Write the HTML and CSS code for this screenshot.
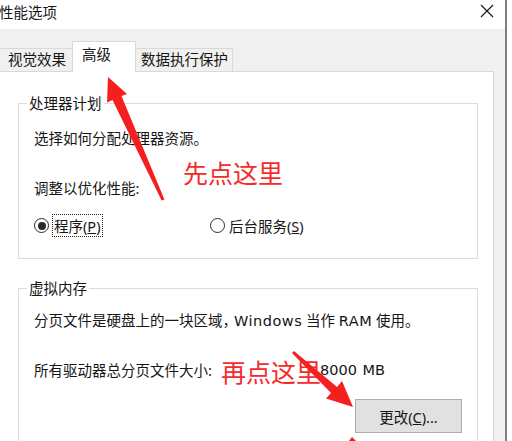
FILE: index.html
```html
<!DOCTYPE html>
<html lang="zh-CN">
<head>
<meta charset="utf-8">
<title>性能选项</title>
<link rel="stylesheet" href="styles.css">
</head>
<body>
<div class="page">
  <div class="window">
    <div class="titlebar">
      <span class="title">性能选项</span>
      <svg class="close" width="14" height="14" viewBox="0 0 14 14"><path d="M1 1 L13 13 M13 1 L1 13" stroke="#111" stroke-width="1.1" fill="none"/></svg>
    </div>
    <div class="client">
      <div class="tabs">
        <div class="tab tab-first">视觉效果</div>
        <div class="tab tab-active">高级</div>
        <div class="tab tab-last">数据执行保护</div>
      </div>
      <div class="panel">
        <div class="group group-cpu">
          <div class="legend">处理器计划</div>
          <div class="row row-a">选择如何分配处理器资源。</div>
          <div class="row row-b">调整以优化性能:</div>
          <div class="radios">
            <div class="radio-item radio-first">
              <span class="radio checked"></span>
              <span class="radio-label focused">程序(<u>P</u>)</span>
            </div>
            <div class="radio-item">
              <span class="radio"></span>
              <span class="radio-label">后台服务(<u>S</u>)</span>
            </div>
          </div>
        </div>
        <div class="group group-mem">
          <div class="legend">虚拟内存</div>
          <div class="row row-c">分页文件是硬盘上的一块区域<span class="comma">，</span><span class="latin">Windows</span> 当作 <span class="latin">RAM</span> 使用。</div>
          <div class="row row-d"><span class="size-label">所有驱动器总分页文件大小:</span><span class="size-value latin">8000 MB</span></div>
          <div class="btn-row"><button class="btn">更改(<u>C</u>)...</button></div>
        </div>
      </div>
    </div>
  </div>
  <div class="outside"></div>
</div>
<div class="annot annot-1">先点这里</div>
<div class="annot annot-2">再点这里</div>
<svg class="arrows" width="512" height="441" viewBox="0 0 512 441">
  <polygon fill="#f51f1f" points="108,77 127,94 121.5,96 164.4,199.4 161.6,200.6 112.5,100 107,102.5"/>
  <polygon fill="#f51f1f" points="353,407 326,398.5 331,393 292,353 294,351 337,387 342,381"/>
  <polygon fill="#f51f1f" points="352,437 356,441 349,441"/>
</svg>
</body>
</html>
```
FILE: styles.css
```css
* { box-sizing: border-box; }
html, body {
  margin: 0;
  padding: 0;
  width: 512px;
  height: 441px;
  overflow: hidden;
  background: #fff;
  position: relative;
  font-family: "Noto Sans", "Noto Sans CJK SC", sans-serif;
  font-size: 14.5px;
  color: #161616;
}
.page {
  display: flex;
  width: 512px;
  height: 441px;
}
.window {
  width: 507px;
  height: 441px;
  border-right: 2px solid #808080;
  display: flex;
  flex-direction: column;
  overflow: hidden;
}
.outside {
  flex: 1;
  background: #fff;
}
.titlebar {
  height: 29px;
  background: #fff;
  display: flex;
  align-items: flex-start;
  justify-content: space-between;
  padding: 2px 11px 0 0;
}
.title {
  line-height: 20px;
  margin-left: -1px;
}
.close {
  margin-top: 2px;
}
.client {
  flex: 1;
  background: #f0f0f0;
  padding: 12px 11px 0 0;
  overflow: hidden;
}
.tabs {
  display: flex;
  align-items: flex-end;
  margin-left: -1px;
  height: 30px;
  position: relative;
  z-index: 2;
}
.tab {
  line-height: 20px;
  background: #f0f0f0;
  border-top: 1px solid #d9d9d9;
  height: 23px;
  padding-top: 0;
}
.tab-first {
  width: 73px;
  padding-left: 8px;
  border-left: 1px solid #d9d9d9;
}
.tab-active {
  width: 64px;
  height: 31px;
  margin-bottom: -1px;
  padding-left: 9px;
  padding-top: 2px;
  background: #fff;
  border: 1px solid #d9d9d9;
  border-bottom: none;
}
.tab-last {
  width: 97px;
  padding-left: 5px;
  border-right: 1px solid #d9d9d9;
}
.panel {
  margin-left: -1px;
  background: #fff;
  border: 1px solid #d9d9d9;
  height: 400px;
  padding: 31px 15px 0 18px;
}
.group {
  border: 1px solid #dcdcdc;
  padding: 0 15px 0 15px;
}
.group-cpu {
  padding-bottom: 21px;
}
.group-mem {
  margin-top: 29px;
  padding-bottom: 40px;
}
.legend {
  width: fit-content;
  margin-top: -11px;
  margin-left: -7px;
  padding: 0 2px;
  background: #fff;
  line-height: 20px;
}
.row {
  line-height: 20px;
  white-space: nowrap;
}
.row-a { margin-top: 15px; }
.row-b { margin-top: 30px; }
.row-c { margin-top: 12px; }
.row-d { margin-top: 29px; display: flex; }
.comma {
  letter-spacing: -6px;
  margin-right: 3px;
}
.latin {
  font-family: "DejaVu Sans", "Noto Sans CJK SC", sans-serif;
  font-size: 14.5px;
  word-spacing: 1px;
}
.row-c .latin {
  letter-spacing: 0.5px;
}
.size-label { width: 286px; }
.radios {
  margin-top: 16px;
  height: 23px;
  display: flex;
  align-items: center;
}
.radio-item {
  display: flex;
  align-items: center;
}
.radio-first {
  width: 176px;
}
.radio {
  width: 15px;
  height: 15px;
  border: 1px solid #2a2a2a;
  border-radius: 50%;
  display: flex;
  align-items: center;
  justify-content: center;
  flex: none;
}
.radio.checked::after {
  content: "";
  width: 8px;
  height: 8px;
  border-radius: 50%;
  background: #2a2a2a;
}
.radio-label {
  line-height: 20px;
  margin-left: 4px;
}
.radio-label.focused {
  margin-left: 3px;
  padding: 1px 1px 0 1px;
  border: 1px dotted #222;
  line-height: 20px;
}
.btn-row {
  display: flex;
  justify-content: flex-end;
  margin-top: 19px;
}
.btn {
  width: 107px;
  height: 34px;
  background: #e1e1e1;
  border: 1px solid #adadad;
  font-family: "Noto Sans", "Noto Sans CJK SC", sans-serif;
  font-size: 14.5px;
  color: #161616;
  padding: 0;
}
.annot {
  position: absolute;
  color: #f52a2a;
  font-family: "Noto Sans CJK SC", sans-serif;
  font-size: 25px;
  line-height: 30px;
  white-space: nowrap;
  z-index: 5;
}
.annot-1 { left: 183px; top: 157px; }
.annot-2 { left: 221px; top: 356px; }
.arrows {
  position: absolute;
  left: 0;
  top: 0;
  z-index: 6;
  pointer-events: none;
}
```
